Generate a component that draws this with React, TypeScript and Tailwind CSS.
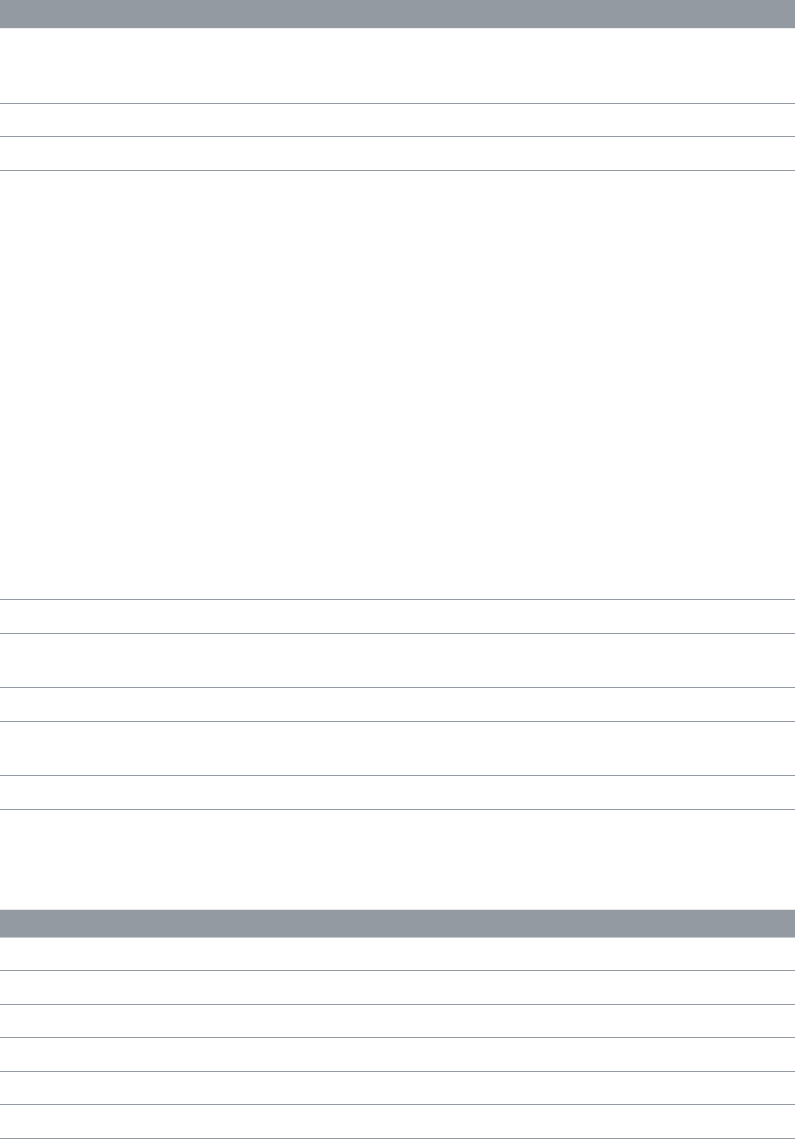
import React from 'react';

const Row: React.FC<{ h: string }> = ({ h }) => (
    <div className={`${h} border-b border-[#939aa2]`}></div>
);

const App: React.FC = () => {
    return (
        <div className="w-[795px] bg-white font-['Liberation_Sans',sans-serif]">
            {/* first table */}
            <div className="h-[29px] bg-[#939aa2] border-b border-[#ececec]"></div>
            <Row h="h-[75px]" />
            <Row h="h-[33px]" />
            <Row h="h-[34px]" />
            <Row h="h-[429px]" />
            <Row h="h-[34px]" />
            <Row h="h-[54px]" />
            <Row h="h-[34px]" />
            <Row h="h-[54px]" />
            <Row h="h-[34px]" />

            {/* second table */}
            <div className="mt-[99px] border-t border-[#e6e6e6]">
                <div className="h-[28px] bg-[#939aa2] border-b border-[#c4c8cc]"></div>
                <Row h="h-[33px]" />
                <Row h="h-[34px]" />
                <Row h="h-[33px]" />
                <Row h="h-[34px]" />
                <Row h="h-[33px]" />
                <Row h="h-[34px]" />
            </div>
        </div>
    );
};

export default App;
